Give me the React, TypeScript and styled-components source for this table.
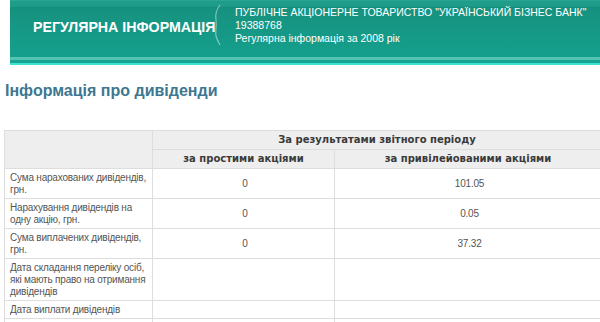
import React from "react";
import styled, { createGlobalStyle } from "styled-components";

const GlobalStyle = createGlobalStyle`
  body {
    margin: 0;
    background: #fff;
    overflow: hidden;
    font-family: "Liberation Sans", Arial, sans-serif;
  }
`;

const Banner = styled.header`
  margin-left: 10px;
  height: 65px;
  display: flex;
  flex-direction: column;
`;

const BannerBody = styled.div`
  height: 56px;
  display: flex;
  align-items: flex-start;
  background: linear-gradient(180deg, #1f9d8a 0px, #1f9d8a 5px, #17917f 6px, #14a08d 56px);
  border-top: 1px solid #2aa794;
`;

const BannerStripe = styled.div<{ h: number; c: string }>`
  height: ${(p) => p.h}px;
  background: ${(p) => p.c};
`;

const BannerTitle = styled.div`
  width: 200px;
  padding: 18px 0 0 23px;
  box-sizing: border-box;
  color: #fff;
  font-weight: bold;
  font-size: 14.2px;
  white-space: nowrap;
`;

const Curve = styled.svg`
  margin: 3px 0 0 2px;
  flex: none;
`;

const CompanyInfo = styled.div`
  padding: 5px 0 0 13px;
  color: #fff;
  font-size: 10.5px;
  line-height: 13px;
  white-space: nowrap;
`;

const Title = styled.h1`
  margin: 15px 0 0 5px;
  font-family: "Liberation Sans", Arial, sans-serif;
  font-size: 16px;
  line-height: 22px;
  font-weight: bold;
  color: #3d7790;
`;

const Table = styled.table`
  margin: 28px 0 0 4px;
  width: 598px;
  border-collapse: collapse;
  table-layout: fixed;
  font-family: "Liberation Sans", Arial, sans-serif;
  font-size: 10px;
  line-height: 12px;
  color: #555;
`;

const Th = styled.th`
  background: #eeeeee;
  border: 1px solid #dddddd;
  padding: 3px 6px;
  font-family: "DejaVu Sans", Verdana, sans-serif;
  font-weight: bold;
  color: #3a3a3a;
  text-align: center;
`;

const Td = styled.td<{ center?: boolean }>`
  border: 1px solid #dddddd;
  padding: 3px 2px 2px 5px;
  height: 12px;
  letter-spacing: -0.2px;
  text-align: ${(p) => (p.center ? "center" : "left")};
  vertical-align: middle;
`;

const rows: [string, string, string][] = [
  ["Сума нарахованих дивідендів, грн.", "0", "101.05"],
  ["Нарахування дивідендів на одну акцію, грн.", "0", "0.05"],
  ["Сума виплачених дивідендів, грн.", "0", "37.32"],
  ["Дата складання переліку осіб, які мають право на отримання дивідендів", "", ""],
  ["Дата виплати дивідендів", "", ""],
  ["", "", ""],
];

function App() {
  return (
    <>
      <GlobalStyle />
      <Banner>
        <BannerBody>
          <BannerTitle>РЕГУЛЯРНА ІНФОРМАЦІЯ</BannerTitle>
          <Curve width="10" height="42" viewBox="0 0 10 42">
            <path
              d="M8 1 C4 6 3 10 4 16 C5 22 3 28 4 32 C5 36 7 39 8 41"
              fill="none"
              stroke="rgba(255,255,255,0.45)"
              strokeWidth="1.2"
            />
          </Curve>
          <CompanyInfo>
            <div>ПУБЛІЧНЕ АКЦІОНЕРНЕ ТОВАРИСТВО "УКРАЇНСЬКИЙ БІЗНЕС БАНК"</div>
            <div>19388768</div>
            <div>Регулярна інформація за 2008 рік</div>
          </CompanyInfo>
        </BannerBody>
        <BannerStripe h={3} c="#56c2b2" />
        <BannerStripe h={3} c="#13a592" />
        <BannerStripe h={2} c="#3fe3d2" />
      </Banner>
      <Title>Інформація про дивіденди</Title>
      <Table>
        <colgroup>
          <col style={{ width: 148 }} />
          <col style={{ width: 182 }} />
          <col />
        </colgroup>
        <thead>
          <tr>
            <Th rowSpan={2}></Th>
            <Th colSpan={2}>За результатами звітного періоду</Th>
          </tr>
          <tr>
            <Th>за простими акціями</Th>
            <Th>за привілейованими акціями</Th>
          </tr>
        </thead>
        <tbody>
          {rows.map(([label, a, b], i) => (
            <tr key={i}>
              <Td>{label}</Td>
              <Td center>{a}</Td>
              <Td center>{b}</Td>
            </tr>
          ))}
        </tbody>
      </Table>
    </>
  );
}

export default App;
